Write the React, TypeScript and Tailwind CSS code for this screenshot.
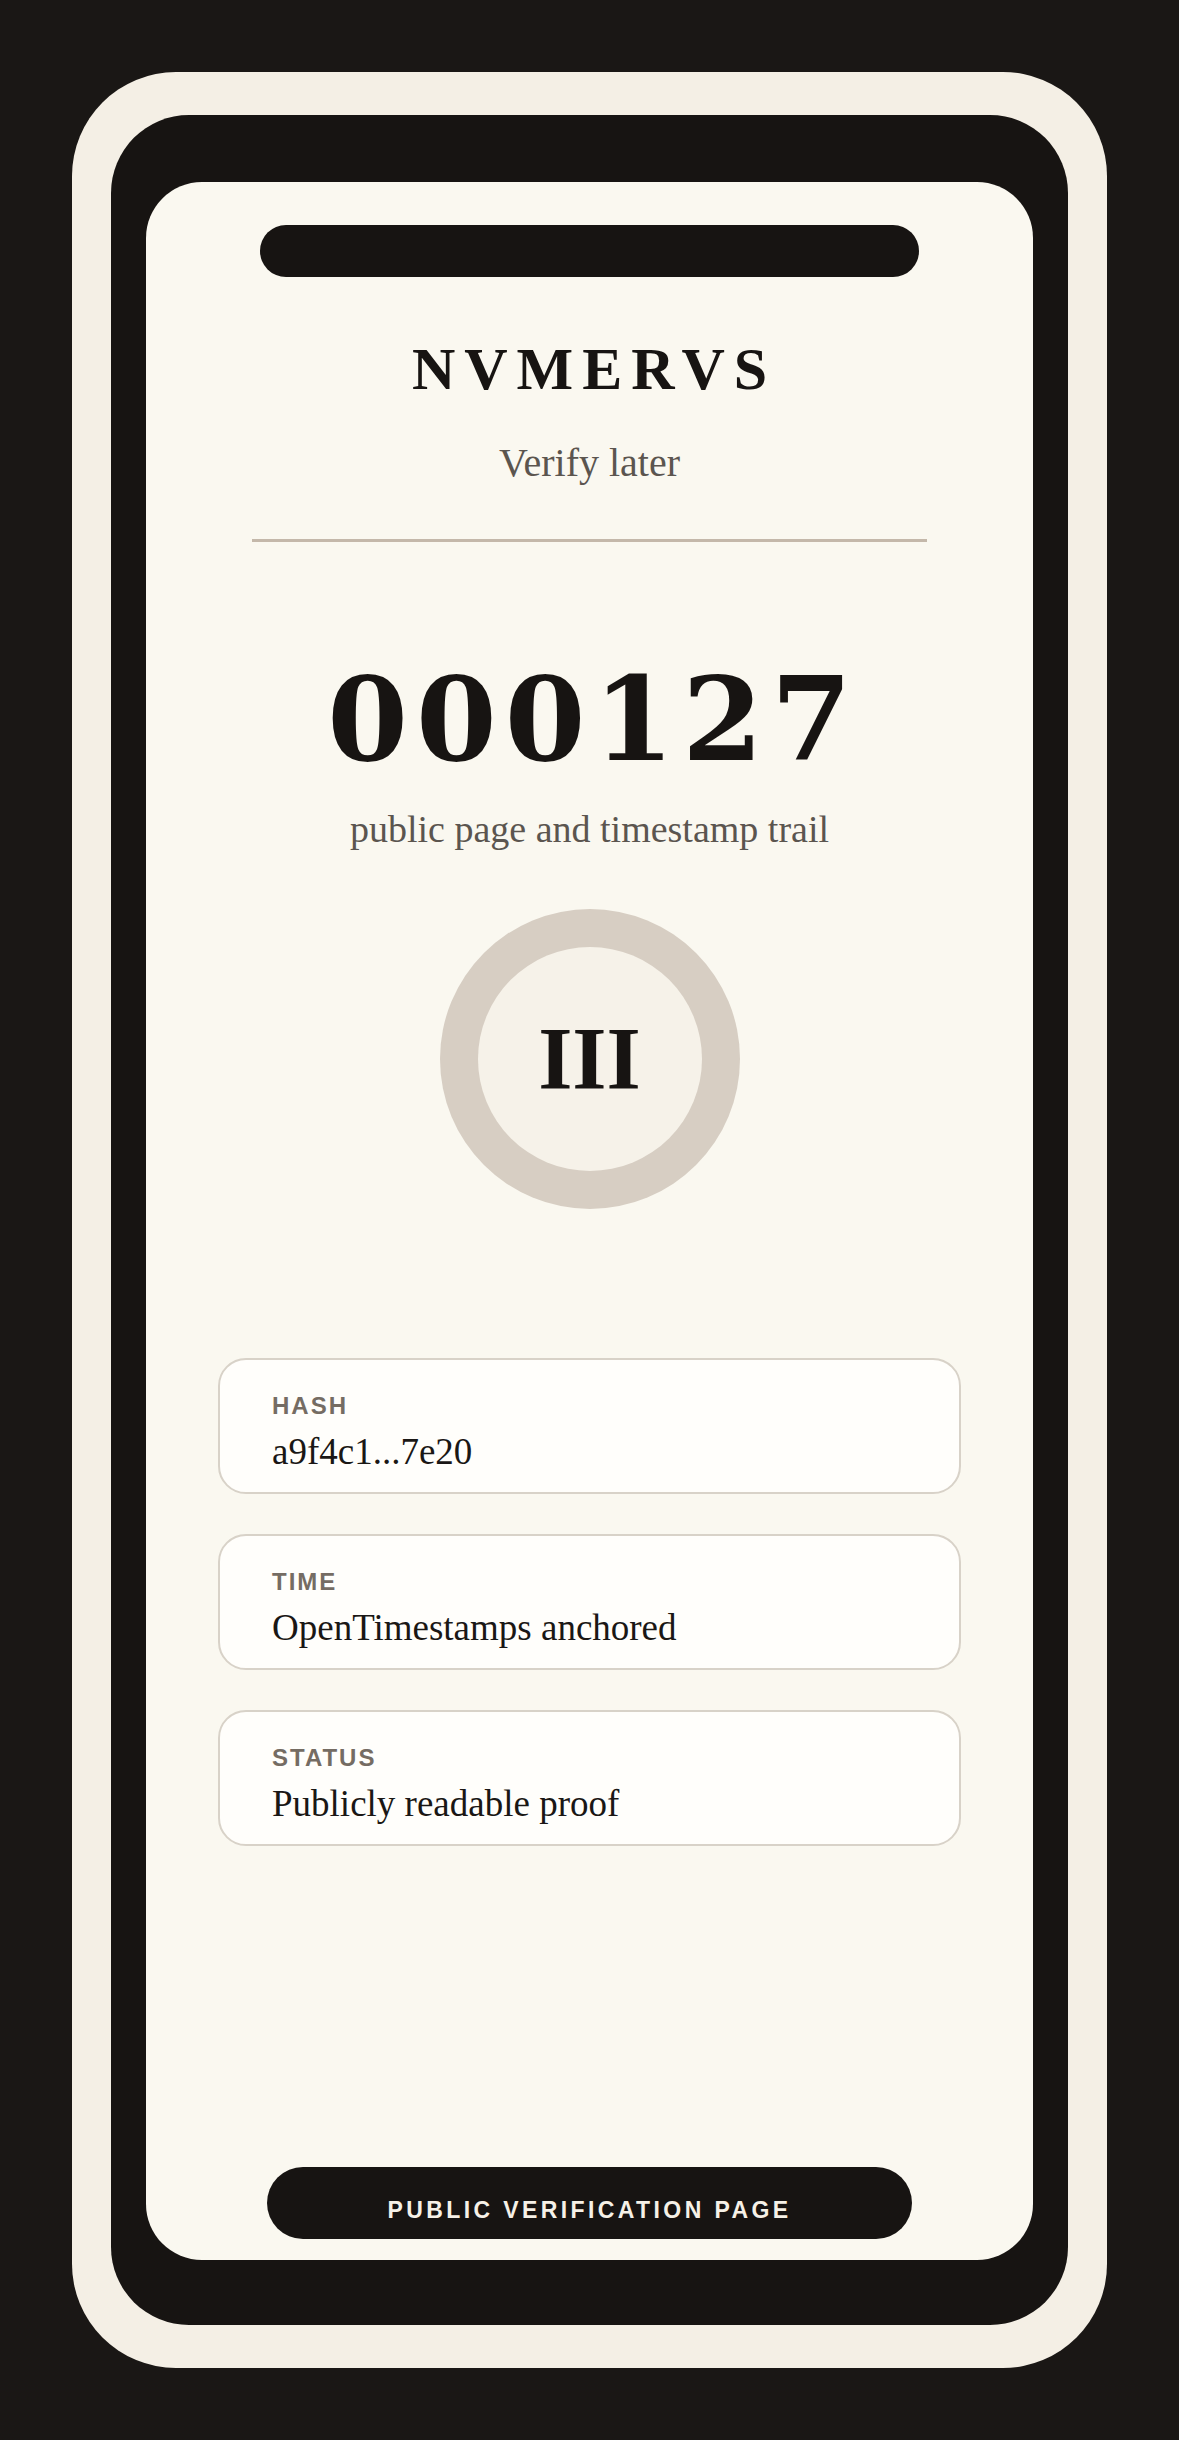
const fields = [
  { label: 'HASH', value: 'a9f4c1...7e20' },
  { label: 'TIME', value: 'OpenTimestamps anchored' },
  { label: 'STATUS', value: 'Publicly readable proof' },
];

function Field({ label, value }: { label: string; value: string }) {
  return (
    <div className="w-[743px] h-[136px] rounded-[28px] border-2 border-[#d8d2c8] bg-[#fffefb] pl-[52px] pt-[34px]">
      <div className="font-['Liberation_Sans',sans-serif] font-bold text-[24px] leading-none tracking-[2px] text-[#756c63]">
        {label}
      </div>
      <div className="mt-[15px] font-['Liberation_Serif',serif] text-[37px] leading-none text-[#1a1715]">
        {value}
      </div>
    </div>
  );
}

export default function App() {
  return (
    <div className="min-h-screen h-[2440px] bg-[#1a1715] px-[72px] pt-[72px]">
      {/* outer cream shell */}
      <div className="h-[2296px] rounded-[104px] bg-[#f4efe5] px-[39px] py-[43px]">
        {/* black bezel */}
        <div className="h-full rounded-[78px] bg-[#171412] px-[35px] pt-[67px] pb-[65px]">
          {/* screen */}
          <div className="h-full rounded-[56px] bg-[#faf8f0] flex flex-col items-center">
            <div className="mt-[43px] w-[659px] h-[52px] rounded-full bg-[#171412]" />

            <h1 className="mt-[62px] pl-[9px] font-['Liberation_Serif',serif] font-bold text-[60px] leading-none tracking-[9px] text-[#171412]">
              NVMERVS
            </h1>
            <p className="mt-[44px] font-['Liberation_Serif',serif] text-[40px] leading-none text-[#5b554f]">
              Verify later
            </p>

            <div className="mt-[56px] w-[675px] h-[3px] bg-[#c4b8aa]" />

            <div className="mt-[119px] pl-[8px] font-['DejaVu_Serif',serif] font-bold text-[116px] leading-none tracking-[8px] text-[#171412]">
              000127
            </div>
            <p className="mt-[33px] font-['Liberation_Serif',serif] text-[38px] leading-none text-[#5b554f]">
              public page and timestamp trail
            </p>

            <div className="mt-[61px] w-[300px] h-[300px] rounded-full bg-[#d7cec3] flex items-center justify-center">
              <div className="w-[224px] h-[224px] rounded-full bg-[#f6f2e9] flex items-center justify-center">
                <span className="font-['Liberation_Serif',serif] font-bold text-[88px] leading-none text-[#171412]">
                  III
                </span>
              </div>
            </div>

            <div className="mt-[149px] flex flex-col gap-[40px]">
              {fields.map(f => <Field key={f.label} label={f.label} value={f.value} />)}
            </div>

            <button className="mt-auto mb-[21px] w-[645px] h-[72px] rounded-full bg-[#171412] pt-[14px] font-['Liberation_Sans',sans-serif] font-bold text-[23px] tracking-[3.4px] text-[#f6f1e7]">
              PUBLIC VERIFICATION PAGE
            </button>
          </div>
        </div>
      </div>
    </div>
  );
}
